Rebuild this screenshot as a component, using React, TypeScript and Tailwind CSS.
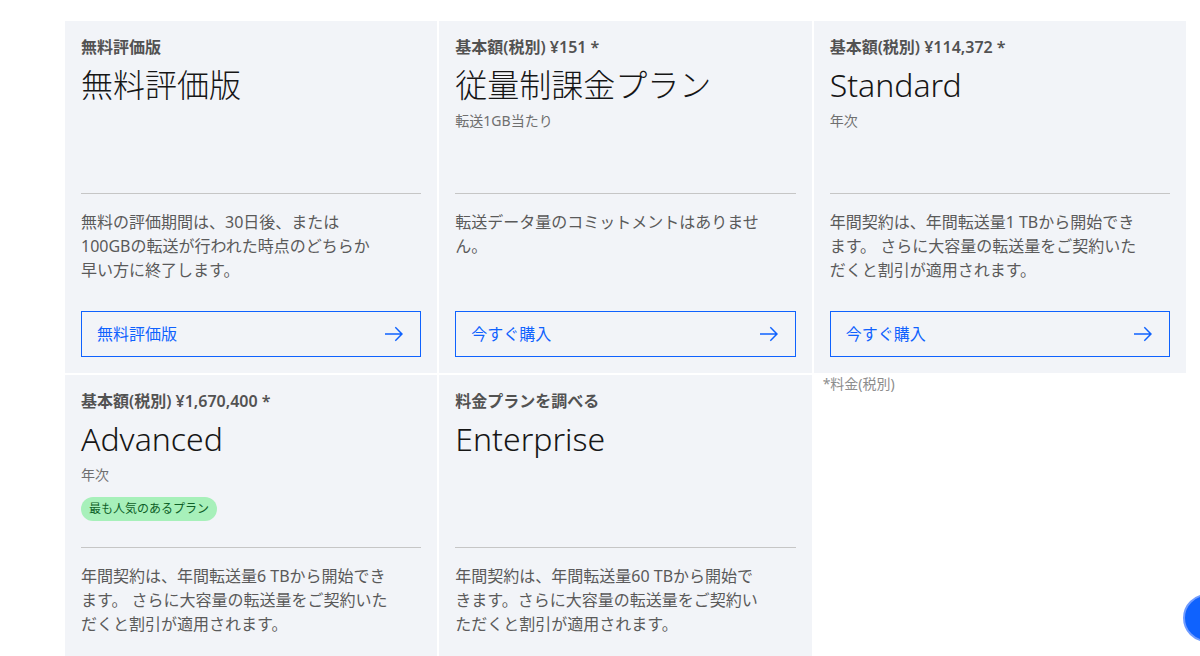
import React from 'react';

type Plan = {
  label: string;
  title: string;
  sub?: string;
  badge?: string;
  desc: string[];
  cta?: string;
};

const plans: Plan[] = [
  {
    label: '無料評価版',
    title: '無料評価版',
    desc: ['無料の評価期間は、30日後、または', '100GBの転送が行われた時点のどちらか', '早い方に終了します。'],
    cta: '無料評価版',
  },
  {
    label: '基本額(税別) ¥151 *',
    title: '従量制課金プラン',
    sub: '転送1GB当たり',
    desc: ['転送データ量のコミットメントはありませ', 'ん。'],
    cta: '今すぐ購入',
  },
  {
    label: '基本額(税別) ¥114,372 *',
    title: 'Standard',
    sub: '年次',
    desc: ['年間契約は、年間転送量1 TBから開始でき', 'ます。 さらに大容量の転送量をご契約いた', 'だくと割引が適用されます。'],
    cta: '今すぐ購入',
  },
  {
    label: '基本額(税別) ¥1,670,400 *',
    title: 'Advanced',
    sub: '年次',
    badge: '最も人気のあるプラン',
    desc: ['年間契約は、年間転送量6 TBから開始でき', 'ます。 さらに大容量の転送量をご契約いた', 'だくと割引が適用されます。'],
  },
  {
    label: '料金プランを調べる',
    title: 'Enterprise',
    desc: ['年間契約は、年間転送量60 TBから開始で', 'きます。さらに大容量の転送量をご契約い', 'ただくと割引が適用されます。'],
  },
];

const ArrowRight = () => (
  <svg width="20" height="20" viewBox="0 0 20 20" fill="currentColor">
    <path d="M11.8 2.8L10.8 3.8 16.2 9.3 1 9.3 1 10.7 16.2 10.7 10.8 16.2 11.8 17.2 19 10z" />
  </svg>
);

const PlanCard: React.FC<{ plan: Plan }> = ({ plan }) => (
  <div className="bg-[#f2f4f8] p-4 flex flex-col">
    <div className="min-h-[156px]">
      <div className="text-[16px] leading-5 font-semibold text-[#525252]">{plan.label}</div>
      <div className="mt-2 text-[32px] leading-10 font-light text-[#161616]">{plan.title}</div>
      {plan.sub && <div className="mt-[6px] text-[14px] leading-5 text-[#6f6f6f]">{plan.sub}</div>}
      {plan.badge && (
        <span className="mt-3 inline-flex items-center h-6 px-2 rounded-full bg-[#a7f0ba] text-[12px] text-[#0e6027]">
          {plan.badge}
        </span>
      )}
    </div>
    <div className="h-px bg-[#c6c6c6]" />
    <p className="mt-4 mb-[29px] text-[16px] leading-6 text-[#5a5a5a]">
      {plan.desc.map((line, i) => (
        <React.Fragment key={i}>
          {line}
          {i < plan.desc.length - 1 && <br />}
        </React.Fragment>
      ))}
    </p>
    {plan.cta && (
      <button className="mt-auto h-[46px] w-full border border-[#0f62fe] text-[#0f62fe] flex items-center justify-between pl-[15px] pr-4 text-[16px] text-left cursor-pointer">
        <span>{plan.cta}</span>
        <ArrowRight />
      </button>
    )}
  </div>
);

export default function App() {
  return (
    <div
      className="relative w-[1200px] h-[656px] overflow-hidden bg-white"
      style={{ fontFamily: '"Noto Sans", "Noto Sans CJK JP", sans-serif' }}
    >
      <div className="pl-[65px] pt-[21px]">
        <div className="w-[1121px] grid grid-cols-3 gap-[2px]">
          {plans.map((p, i) => (
            <PlanCard key={i} plan={p} />
          ))}
          <div className="pl-[9px] pt-px text-[14px] leading-4 text-[#8d8d8d]">*料金(税別)</div>
        </div>
      </div>
      <div className="absolute left-[1183px] top-[594px] w-12 h-12 rounded-full bg-[#0f62fe] border-2 border-[#6f9bff]" />
    </div>
  );
}
